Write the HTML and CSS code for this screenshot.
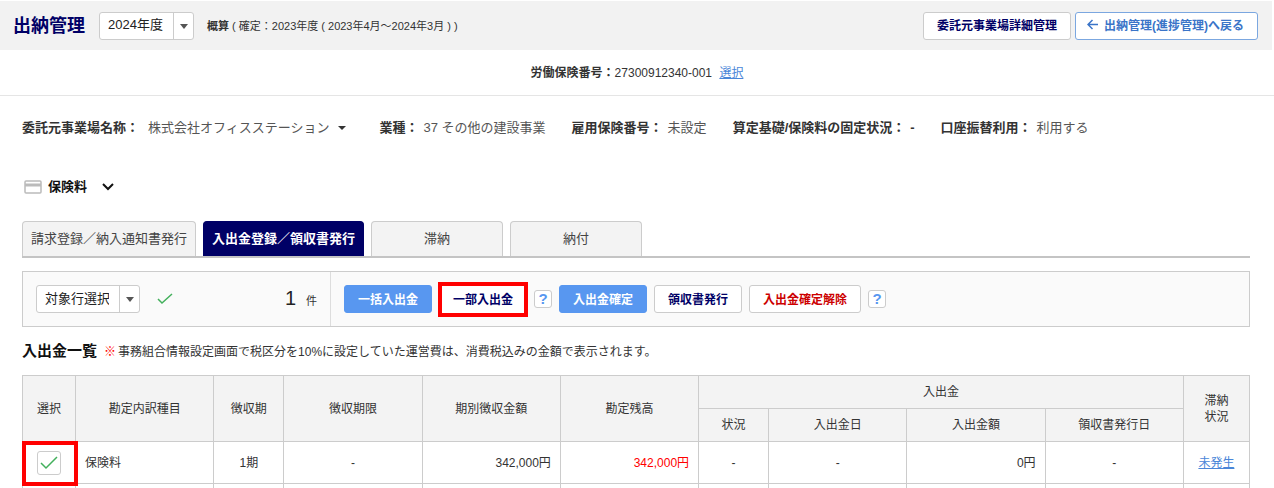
FILE: index.html
```html
<!DOCTYPE html>
<html lang="ja">
<head>
    <meta charset="UTF-8">
    <meta name="viewport" content="width=device-width, initial-scale=1.0">
    <title>出納管理</title>
    <link rel="stylesheet" href="styles.css">
</head>
<body>
    <header class="page-header">
        <h1 class="page-title">出納管理</h1>
        <div class="select-box">
            <select class="year-select" aria-label="年度">
                <option>2024年度</option>
            </select>
        </div>
        <p class="period"><b>概算</b> ( 確定：2023年度 ( 2023年4月～2024年3月 ) )</p>
        <div class="header-buttons">
            <button type="button" class="btn">委託元事業場詳細管理</button>
            <button type="button" class="btn btn-back">
                <svg width="11" height="11" viewBox="0 0 11 11" fill="none" stroke="currentColor" stroke-width="1.5"><path d="M11 5.5H1M5.5 1L1 5.5L5.5 10"/></svg>
                出納管理(進捗管理)へ戻る
            </button>
        </div>
    </header>

    <div class="insurance-number">
        <b>労働保険番号：</b>27300912340-001 <a href="#" class="link">選択</a>
    </div>

    <main class="content">
        <dl class="info">
            <div class="info-item info-office">
                <dt>委託元事業場名称：</dt>
                <dd><button type="button" class="office-menu">株式会社オフィスステーション</button></dd>
            </div>
            <div class="info-item"><dt>業種：</dt><dd>37 その他の建設事業</dd></div>
            <div class="info-item"><dt>雇用保険番号：</dt><dd>未設定</dd></div>
            <div class="info-item"><dt>算定基礎/保険料の固定状況：</dt><dd><b>-</b></dd></div>
            <div class="info-item"><dt>口座振替利用：</dt><dd>利用する</dd></div>
        </dl>

        <button type="button" class="category">
            <svg width="18" height="14" viewBox="0 0 18 14" fill="none" stroke="#bbb"><rect x="1" y="1" width="16" height="12" rx="1" stroke-width="1.5"/><path d="M1 5H17" stroke-width="3"/></svg>
            保険料
            <svg class="chevron" width="12" height="8" viewBox="0 0 12 8" fill="none" stroke="#111" stroke-width="2"><path d="M1 1L6 6L11 1"/></svg>
        </button>

        <nav class="tabs">
            <button type="button" class="tab">請求登録／納入通知書発行</button>
            <button type="button" class="tab active">入出金登録／領収書発行</button>
            <button type="button" class="tab">滞納</button>
            <button type="button" class="tab">納付</button>
        </nav>

        <div class="toolbar">
            <div class="target">
                <div class="select-box">
                    <select class="row-select" aria-label="対象行選択">
                        <option>対象行選択</option>
                    </select>
                </div>
                <svg class="check" width="16" height="12" viewBox="0 0 16 12"><path d="M1 6L5 10L15 1"/></svg>
                <p class="count"><span class="count-number">1</span>件</p>
            </div>
            <div class="actions">
                <button type="button" class="btn btn-primary">一括入出金</button>
                <span class="marked"><button type="button" class="btn">一部入出金</button></span>
                <button type="button" class="help">?</button>
                <button type="button" class="btn btn-primary">入出金確定</button>
                <button type="button" class="btn">領収書発行</button>
                <button type="button" class="btn btn-danger">入出金確定解除</button>
                <button type="button" class="help">?</button>
            </div>
        </div>

        <div class="list-heading">
            <h2>入出金一覧</h2>
            <p><span class="mark">※</span>事務組合情報設定画面で税区分を10%に設定していた運営費は、消費税込みの金額で表示されます。</p>
        </div>

        <table class="list">
            <colgroup>
                <col class="col-check">
                <col class="col-wide">
                <col class="col-narrow">
                <col class="col-wide">
                <col class="col-wide">
                <col class="col-wide">
                <col class="col-narrow">
                <col class="col-wide">
                <col class="col-wide">
                <col class="col-wide">
                <col class="col-overdue">
            </colgroup>
            <thead>
                <tr>
                    <th rowspan="2">選択</th>
                    <th rowspan="2">勘定内訳種目</th>
                    <th rowspan="2">徴収期</th>
                    <th rowspan="2">徴収期限</th>
                    <th rowspan="2">期別徴収金額</th>
                    <th rowspan="2">勘定残高</th>
                    <th colspan="4">入出金</th>
                    <th rowspan="2">滞納<br>状況</th>
                </tr>
                <tr>
                    <th>状況</th>
                    <th>入出金日</th>
                    <th>入出金額</th>
                    <th>領収書発行日</th>
                </tr>
            </thead>
            <tbody>
                <tr>
                    <td class="marked-cell">
                        <label class="row-check">
                            <input type="checkbox" aria-label="保険料 1期を選択" checked>
                            <svg class="check" width="18" height="14" viewBox="0 0 18 14"><path d="M1 7L6 12L17 1"/></svg>
                        </label>
                    </td>
                    <td class="left">保険料</td>
                    <td>1期</td>
                    <td>-</td>
                    <td class="right">342,000円</td>
                    <td class="right red">342,000円</td>
                    <td>-</td>
                    <td>-</td>
                    <td class="right">0円</td>
                    <td>-</td>
                    <td><a href="#" class="link">未発生</a></td>
                </tr>
                <tr class="spacer-row">
                    <td></td><td></td><td></td><td></td><td></td><td></td><td></td><td></td><td></td><td></td><td></td>
                </tr>
            </tbody>
        </table>
    </main>
</body>
</html>
```

FILE: styles.css
```css
* {
    box-sizing: border-box;
}
body {
    margin: 0;
    background: #fff;
    color: #333;
    font-family: "Liberation Sans", "Noto Sans CJK JP", sans-serif;
    font-size: 12px;
    line-height: 16px;
}
h1, h2, p, dl, dd {
    margin: 0;
}
button, select {
    font-family: inherit;
    cursor: pointer;
}

/* header */
.page-header {
    display: flex;
    align-items: center;
    height: 49px;
    margin: 1px 2px 0 0;
    padding: 0 14px 0 13px;
    background: #f2f2f2;
}
.page-title {
    margin-right: 14px;
    color: #000066;
    font-size: 18px;
    line-height: 24px;
}
.select-box {
    position: relative;
}
.select-box select {
    display: block;
    height: 28px;
    padding: 0 30px 2px 8px;
    appearance: none;
    background: #fff;
    border: 1px solid #ccc;
    border-radius: 3px;
    color: #222;
    font-size: 13px;
}
.select-box::before {
    content: "";
    position: absolute;
    top: 1px;
    bottom: 1px;
    right: 20px;
    border-left: 1px solid #ccc;
    pointer-events: none;
}
.select-box::after {
    content: "";
    position: absolute;
    top: 12px;
    right: 6px;
    border: 4px solid transparent;
    border-top: 5px solid #555;
    border-bottom: 0;
    pointer-events: none;
}
.select-box .year-select {
    width: 95px;
}
.select-box .row-select {
    width: 104px;
}
.period {
    margin-left: 13px;
    font-size: 11px;
}
.header-buttons {
    display: flex;
    gap: 4px;
    margin-left: auto;
}
.btn {
    height: 28px;
    padding: 0 13px 2px;
    background: #fff;
    border: 1px solid #ccc;
    border-radius: 3px;
    color: #000066;
    font-size: 12px;
    font-weight: bold;
    white-space: nowrap;
}
.btn-back {
    display: flex;
    align-items: center;
    gap: 6px;
    padding: 0 13px 2px 11px;
    border-color: #7ba7e0;
    color: #3a74c8;
}
.btn-primary {
    background: #5897f0;
    border-color: #5897f0;
    color: #fff;
}
.btn-danger {
    color: #cc0000;
}
.link {
    color: #4a86d8;
}

.insurance-number {
    height: 46px;
    padding-top: 15px;
    border-bottom: 1px solid #e5e5e5;
    text-align: center;
}
.insurance-number .link {
    margin-left: 4px;
}

.content {
    padding: 0 24px 0 22px;
}

/* office information */
.info {
    display: flex;
    gap: 26px;
    padding-top: 24px;
    font-size: 13px;
    white-space: nowrap;
}
.info-item {
    display: flex;
    gap: 5px;
}
.info-office {
    gap: 9px;
    margin-right: 8px;
}
.info dt {
    font-weight: bold;
}
.info dd {
    color: #555;
}
.info dd b {
    color: #333;
}
.office-menu {
    display: flex;
    align-items: center;
    gap: 8px;
    padding: 0;
    background: none;
    border: 0;
    color: #555;
    font-size: 13px;
    line-height: 16px;
}
.office-menu::after {
    content: "";
    border: 4px solid transparent;
    border-top: 4px solid #333;
    border-bottom: 0;
}
.category {
    display: flex;
    align-items: center;
    gap: 6px;
    margin-top: 42px;
    padding: 0 2px;
    background: none;
    border: 0;
    color: #111;
    font-size: 13px;
    font-weight: bold;
    line-height: 18px;
}
.chevron {
    margin-left: 9px;
}

/* tabs */
.tabs {
    display: flex;
    gap: 7px;
    margin-top: 25px;
    border-bottom: 2px solid #c4c4c4;
}
.tab {
    min-width: 132px;
    height: 35px;
    padding: 0 8px 3px;
    background: #f3f3f3;
    border: 1px solid #ccc;
    border-bottom: 0;
    border-radius: 4px 4px 0 0;
    color: #444;
    font-size: 13px;
    white-space: nowrap;
}
.tab.active {
    background: #000066;
    border-color: #000066;
    color: #fff;
    font-weight: bold;
}

/* toolbar */
.toolbar {
    display: flex;
    height: 56px;
    margin-top: 13px;
    background: #fafafa;
    border: 1px solid #ccc;
}
.target {
    display: flex;
    align-items: center;
    width: 308px;
    padding: 0 13px;
    border-right: 1px solid #ddd;
}
.check {
    fill: none;
    stroke: #43b05c;
    stroke-width: 1.5;
}
.target .check {
    margin-left: 17px;
}
.count {
    margin-left: auto;
    font-size: 11px;
}
.count-number {
    margin-right: 10px;
    color: #222;
    font-size: 20px;
}
.actions {
    display: flex;
    align-items: center;
    gap: 7px;
    padding-left: 13px;
}
.marked {
    display: flex;
    margin: 0 -1px;
    border: 4px solid #ff0000;
}
.marked .btn {
    width: 82px;
    height: 27px;
    padding: 0 0 2px;
    border-color: #fff;
    border-radius: 0;
}
.help {
    width: 18px;
    height: 18px;
    padding: 0;
    background: #fff;
    border: 1px solid #ccc;
    border-radius: 3px;
    color: #5897f0;
    font-size: 15px;
    font-weight: bold;
    line-height: 16px;
}

/* list */
.list-heading {
    display: flex;
    align-items: center;
    gap: 7px;
    margin: 14px 0;
}
.list-heading h2 {
    color: #111;
    font-size: 15px;
    line-height: 20px;
}
.mark {
    margin-right: 2px;
    color: #ff0000;
    font-family: "Noto Sans CJK JP", sans-serif;
    font-weight: bold;
}
.list {
    width: 100%;
    table-layout: fixed;
    border-collapse: collapse;
}
.col-check {
    width: 53px;
}
.col-wide {
    width: 138px;
}
.col-narrow {
    width: 70px;
}
.col-overdue {
    width: 66px;
}
.list th,
.list td {
    padding: 0 9px;
    border: 1px solid #ccc;
    text-align: center;
}
.list th {
    height: 33px;
    background: #f3f3f3;
    font-weight: normal;
}
.list td {
    height: 42px;
}
.list .spacer-row td {
    height: 4px;
    border-bottom: 0;
}
.list .left {
    text-align: left;
}
.list .right {
    text-align: right;
}
.list .red {
    color: #ff0000;
}
.marked-cell {
    position: relative;
}
.marked-cell::after {
    content: "";
    position: absolute;
    top: -1px;
    right: -3px;
    bottom: -3px;
    left: -1px;
    border: 4px solid #ff0000;
    pointer-events: none;
}
.row-check {
    display: grid;
    place-items: center;
}
.row-check input,
.row-check svg {
    grid-area: 1 / 1;
}
.row-check input {
    width: 24px;
    height: 24px;
    margin: 0;
    appearance: none;
    border: 1px solid #ccc;
    border-radius: 3px;
}
.row-check input:not(:checked) + svg {
    visibility: hidden;
}
```
